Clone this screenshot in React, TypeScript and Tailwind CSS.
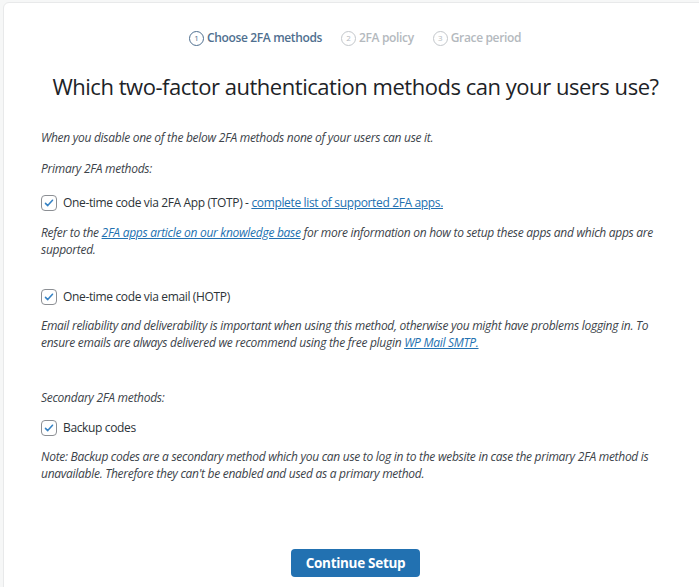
import React, { useState } from 'react';

const font = { fontFamily: '"Open Sans", "Noto Sans", sans-serif' };

const Step = ({ n, label, active }: { n: number; label: string; active?: boolean }) => (
  <div className={`flex items-center gap-[3px] ${active ? 'text-[#4f6f8f]' : 'text-[#b4b9be]'}`}>
    <span
      className={`flex h-[15px] w-[15px] items-center justify-center rounded-full border text-[8px] leading-none ${
        active ? 'border-[#4f6f8f]' : 'border-[#c3c7cb]'
      }`}
    >
      {n}
    </span>
    <span className="text-[12px] font-semibold tracking-[-0.35px]">{label}</span>
  </div>
);

const Check = ({ checked, onChange, children }: { checked: boolean; onChange: () => void; children: React.ReactNode }) => (
  <label className="flex cursor-pointer items-center gap-[6px] text-[12px] tracking-[-0.35px] text-[#2c3338]">
    <span
      onClick={onChange}
      className="flex h-[16px] w-[16px] shrink-0 items-center justify-center rounded-[4px] border border-[#8c8f94] bg-white"
    >
      {checked && (
        <svg viewBox="0 0 20 20" className="h-[14px] w-[14px]">
          <path d="M5 10.5l3.2 3.2L15 6" fill="none" stroke="#3582c4" strokeWidth="2.2" strokeLinecap="round" strokeLinejoin="round" />
        </svg>
      )}
    </span>
    <span>{children}</span>
  </label>
);

const Link = ({ children }: { children: React.ReactNode }) => (
  <a href="#" className="text-[#2271b1] underline underline-offset-[1px]">
    {children}
  </a>
);

export default function App() {
  const [totp, setTotp] = useState(true);
  const [hotp, setHotp] = useState(true);
  const [backup, setBackup] = useState(true);

  return (
    <div className="h-[587px] w-[699px] overflow-hidden bg-[#f6f7f7] pl-[3px] pt-[2px]" style={font}>
      <div className="flex h-[620px] w-[710px] flex-col rounded-tl-[6px] border border-[#e8e9ea] bg-white px-[37px]">
        <div className="mt-[26px] flex justify-center gap-[19px] pr-[6px]">
          <Step n={1} label="Choose 2FA methods" active />
          <Step n={2} label="2FA policy" />
          <Step n={3} label="Grace period" />
        </div>

        <h2 className="mt-[23px] pr-[5px] text-center text-[22px] font-medium tracking-[-0.47px] text-[#1d2327]">
          Which two-factor authentication methods can your users use?
        </h2>

        <div className="mt-[26px] w-[626px] text-[12px] italic leading-[17px] tracking-[-0.28px] text-[#3c434a]">
          <p>When you disable one of the below 2FA methods none of your users can use it.</p>
          <p className="mt-[14px]">Primary 2FA methods:</p>

          <div className="mt-[17px] not-italic">
            <Check checked={totp} onChange={() => setTotp(!totp)}>
              One-time code via 2FA App (TOTP) - <Link>complete list of supported 2FA apps.</Link>
            </Check>
          </div>
          <p className="mt-[13px]">
            Refer to the <Link>2FA apps article on our knowledge base</Link> for more information on how to setup these
            apps and which apps are supported.
          </p>

          <div className="mt-[30px] not-italic">
            <Check checked={hotp} onChange={() => setHotp(!hotp)}>
              One-time code via email (HOTP)
            </Check>
          </div>
          <p className="mt-[12px]">
            Email reliability and deliverability is important when using this method, otherwise you might have problems
            logging in. To ensure emails are always delivered we recommend using the free plugin <Link>WP Mail SMTP.</Link>
          </p>

          <p className="mt-[38px]">Secondary 2FA methods:</p>

          <div className="mt-[13px] not-italic">
            <Check checked={backup} onChange={() => setBackup(!backup)}>
              Backup codes
            </Check>
          </div>
          <p className="mt-[12px]">
            Note: Backup codes are a secondary method which you can use to log in to the website in case the primary 2FA
            method is unavailable. Therefore they can't be enabled and used as a primary method.
          </p>
        </div>

        <div className="mt-[67px] flex justify-center pr-[5px]">
          <button className="h-[28px] w-[129px] rounded-[4px] bg-[#2271b1] text-[13.5px] font-bold tracking-[-0.3px] text-white">
            Continue Setup
          </button>
        </div>
      </div>
    </div>
  );
}
